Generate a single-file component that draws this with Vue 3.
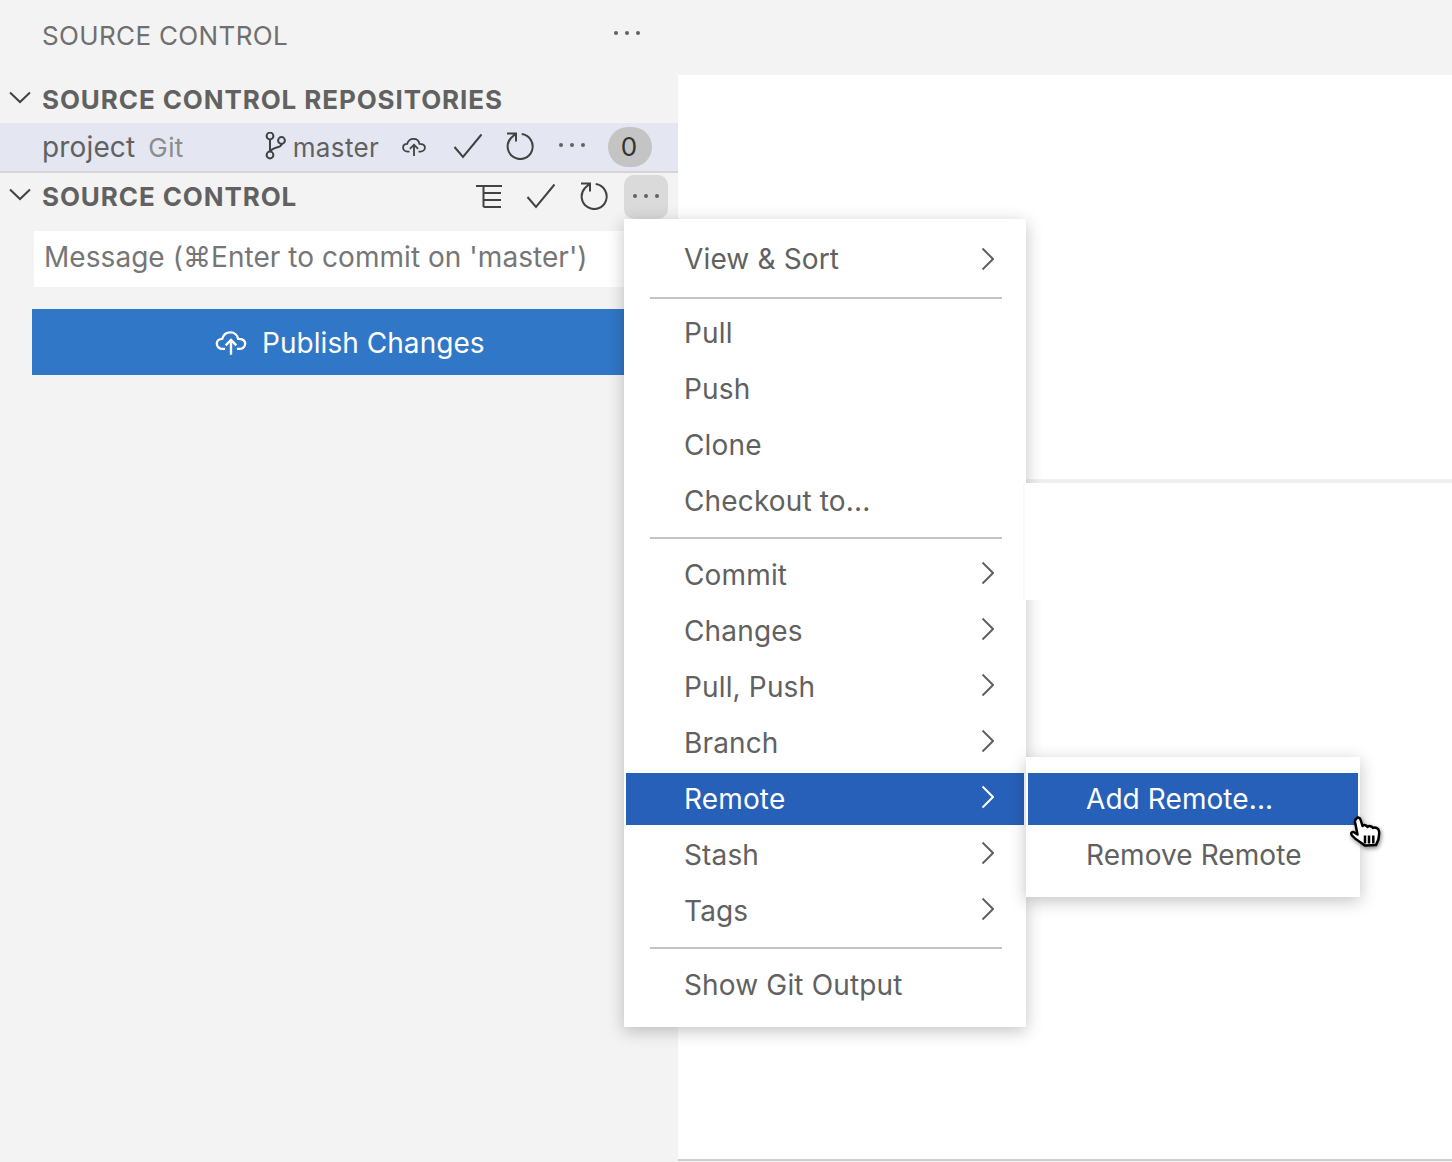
<script setup>
const items = [
  { label: 'View & Sort', sub: true },
  { sep: true },
  { label: 'Pull' },
  { label: 'Push' },
  { label: 'Clone' },
  { label: 'Checkout to...' },
  { sep: true },
  { label: 'Commit', sub: true },
  { label: 'Changes', sub: true },
  { label: 'Pull, Push', sub: true },
  { label: 'Branch', sub: true },
  { label: 'Remote', sub: true, active: true },
  { label: 'Stash', sub: true },
  { label: 'Tags', sub: true },
  { sep: true },
  { label: 'Show Git Output' },
]
</script>

<template>
  <div class="app">
    <aside class="sidebar">
      <div class="title-bar">
        <span class="title">SOURCE CONTROL</span>
        <svg class="dots title-dots" width="28" height="6" viewBox="0 0 28 6"><circle cx="3" cy="3" r="2"/><circle cx="14" cy="3" r="2"/><circle cx="25" cy="3" r="2"/></svg>
      </div>

      <div class="section-head">
        <svg class="twist" width="24" height="14" viewBox="0 0 24 14"><path d="M2 2.5 L12 12 L22 2.5"/></svg>
        <span>SOURCE CONTROL REPOSITORIES</span>
      </div>

      <div class="repo-row">
        <span class="repo-name">project</span>
        <span class="repo-type">Git</span>
        <svg class="branch" width="22" height="28" viewBox="0 0 22 28">
          <circle cx="5" cy="4" r="3.4"/><circle cx="5" cy="23" r="3.4"/><circle cx="16.500" cy="8.500" r="3.4"/>
          <path d="M5 7.400 V19.600 M16.500 11.900 C16.500 16.500 7 14.500 5.500 19.700"/>
        </svg>
        <span class="branch-name">master</span>
        <svg class="cloud" width="24" height="20" viewBox="0 0 26 22">
          <path d="M8 16 H6 C3 16 1 14 1 11.500 C1 9 3 7.500 5.500 7.500 C6.500 4 9.500 2 12.500 2 C16 2 18.500 4.500 19 7.500 C22.500 7.500 25 9 25 11.500 C25 14 23 16 20 16 H18"/>
          <path d="M13 21 V9 M8.500 13 L13 8.500 L17.500 13"/>
        </svg>
        <svg class="check" width="30" height="26" viewBox="0 0 30 26"><path d="M1.500 14 L10 24 L28.500 1.500"/></svg>
        <svg class="refresh" width="28" height="28" viewBox="0 0 28 28"><path d="M15.700 2.100 A12.500 12.500 0 1 1 5 6 L10 1.500 M1 1.500 H10 V9.500"/></svg>
        <svg class="dots" width="28" height="6" viewBox="0 0 28 6"><circle cx="3" cy="3" r="2"/><circle cx="14" cy="3" r="2"/><circle cx="25" cy="3" r="2"/></svg>
        <span class="badge">0</span>
      </div>

      <div class="section-head second">
        <svg class="twist" width="24" height="14" viewBox="0 0 24 14"><path d="M2 2.500 L12 12 L22 2.500"/></svg>
        <span>SOURCE CONTROL</span>
        <div class="head-actions">
          <svg class="tree" width="28" height="24" viewBox="0 0 28 24"><path d="M1 2 H27 M8.500 2 V23 M8.500 9 H26 M8.500 16 H26 M8.500 23 H26"/></svg>
          <svg class="check" width="30" height="26" viewBox="0 0 30 26"><path d="M1.500 14 L10 24 L28.500 1.500"/></svg>
          <svg class="refresh" width="28" height="28" viewBox="0 0 28 28"><path d="M15.700 2.100 A12.500 12.500 0 1 1 5 6 L10 1.500 M1 1.500 H10 V9.500"/></svg>
          <span class="more">
            <svg class="dots" width="28" height="6" viewBox="0 0 28 6"><circle cx="3" cy="3" r="2"/><circle cx="14" cy="3" r="2"/><circle cx="25" cy="3" r="2"/></svg>
          </span>
        </div>
      </div>

      <div class="message">Message (⌘Enter to commit on 'master')</div>
      <div class="publish">
        <svg class="cloud white" width="32" height="26" viewBox="0 0 26 22">
          <path d="M8 16 H6 C3 16 1 14 1 11.500 C1 9 3 7.500 5.500 7.500 C6.500 4 9.500 2 12.500 2 C16 2 18.500 4.500 19 7.500 C22.500 7.500 25 9 25 11.500 C25 14 23 16 20 16 H18"/>
          <path d="M13 21 V9 M8.500 13 L13 8.500 L17.500 13"/>
        </svg>
        <span>Publish Changes</span>
      </div>
    </aside>

    <main class="editor">
      <div class="tabs"></div>
      <div class="pane top"></div>
      <div class="pane"></div>
    </main>

    <div class="menu">
      <template v-for="(item, i) in items" :key="i">
        <div v-if="item.sep" class="sep"></div>
        <div v-else class="row" :class="{ active: item.active }">
          <span>{{ item.label }}</span>
          <svg v-if="item.sub" class="chev" width="14" height="24" viewBox="0 0 14 24"><path d="M2.500 1.500 L13 12 L2.500 22.500"/></svg>
        </div>
      </template>
    </div>
    <div class="patch"></div>

    <div class="submenu">
      <div class="row active"><span>Add Remote...</span></div>
      <div class="row"><span>Remove Remote</span></div>
    </div>

    <svg class="hand" width="32" height="36" viewBox="0 0 32 36">
      <path d="M6.500 2.500 C8 1 10 1.500 10.500 3.500 L12.500 10 C14 8.500 16.500 9 17.500 11 C19 9.500 22 10 23 12 C25 11 28.500 12 29 15 C29.500 19 29 24 26 29 L15 29.500 C12 27 6 24 2 19.500 C0.500 17.500 1.500 15.500 3.500 16 L7.500 18.500 L5 6 C4.800 4.500 5.500 3.300 6.500 2.500 Z"/>
      <path class="bars" d="M15 19.500 V27.500 M19 19.500 V27.500 M23.300 19.500 V27.500"/>
    </svg>
  </div>
</template>

<style scoped>
.app {
  display: flex;
  width: 1452px;
  height: 1162px;
  position: relative;
  overflow: hidden;
  font-family: Inter, "Liberation Sans", sans-serif;
  letter-spacing: 0.15px;
  color: #616161;
  background: #f3f3f3;
}

.sidebar {
  width: 678px;
  flex: none;
  background: #f3f3f3;
}

.title-bar {
  height: 75px;
  padding: 0 37px 4px 42px;
  box-sizing: border-box;
  display: flex;
  align-items: center;
  justify-content: space-between;
}

.title {
  font-size: 26px;
  letter-spacing: 0.35px;
  color: #6f6f6f;
}

.title-dots {
  margin-top: -6px;
}

.dots circle {
  fill: #616161;
}

.section-head {
  height: 48px;
  display: flex;
  align-items: center;
  padding-left: 8px;
  font-size: 26px;
  font-weight: 700;
  letter-spacing: 0.9px;
  color: #616161;
}

.section-head.second {
  height: 46px;
}

.twist {
  margin-right: 10px;
  margin-top: -4px;
}

.twist path,
.chev path,
.check path,
.refresh path,
.tree path,
.cloud path,
.branch path,
.branch circle {
  fill: none;
  stroke: #424242;
  stroke-width: 2;
}

.repo-row {
  height: 50px;
  box-sizing: border-box;
  background: #e4e6f1;
  border-bottom: 2px solid #d4d4d9;
  display: flex;
  align-items: center;
  padding-left: 42px;
}

.repo-name {
  font-size: 28px;
}

.repo-type {
  font-size: 26px;
  margin-left: 13px;
  letter-spacing: 0.4px;
  color: #8c8c8c;
}

.branch {
  margin-left: 81px;
  margin-top: -2px;
}

.branch-name {
  font-size: 26px;
  letter-spacing: 0.35px;
  margin-left: 6px;
}

.repo-row .cloud {
  margin-left: 23px;
  margin-top: -1px;
}

.repo-row .check {
  margin-left: 27px;
  margin-top: -3px;
}

.repo-row .refresh {
  margin-left: 23px;
  margin-top: -3px;
}

.repo-row .dots {
  margin-left: 24px;
  margin-top: -4px;
}

.badge {
  width: 44px;
  height: 40px;
  margin-left: 22px;
  border-radius: 20px;
  background: #c4c4c4;
  color: #333;
  font-size: 26px;
  padding: 0 2px 2px 0;
  box-sizing: border-box;
  display: flex;
  align-items: center;
  justify-content: center;
}

.head-actions {
  margin-left: auto;
  display: flex;
  align-items: center;
  padding-right: 10px;
}

.head-actions .check {
  margin-left: 23px;
}

.head-actions .refresh {
  margin-left: 24px;
}

.more {
  width: 44px;
  height: 44px;
  margin-left: 16px;
  margin-top: 2px;
  padding-bottom: 2px;
  box-sizing: border-box;
  border-radius: 10px;
  background: #dadada;
  display: flex;
  align-items: center;
  justify-content: center;
}

.message {
  margin: 12px 32px 0 34px;
  height: 56px;
  background: #fff;
  padding-left: 10px;
  font-size: 28px;
  letter-spacing: 0.05px;
  line-height: 52px;
  color: #767676;
  white-space: nowrap;
}

.publish {
  margin: 22px 32px 0;
  height: 66px;
  box-sizing: border-box;
  padding: 2px 0 0 183px;
  background: #3077c7;
  color: #fff;
  font-size: 28px;
  letter-spacing: 0.05px;
  display: flex;
  align-items: center;
  gap: 15px;
}

.cloud.white path {
  stroke: #fff;
}

.editor {
  flex: 1;
  display: flex;
  flex-direction: column;
  padding-bottom: 1px;
}

.tabs {
  height: 75px;
  flex: none;
}

.pane {
  flex: 1;
  background: #fff;
  border-bottom: 2px solid #cfcfcf;
}

.pane.top {
  flex: none;
  height: 404px;
  border-bottom: 4px solid #efefef;
}

.menu,
.submenu {
  position: absolute;
  display: flex;
  flex-direction: column;
  background: #fff;
  box-shadow: 0 4px 16px rgba(0, 0, 0, 0.24);
  font-size: 28px;
}

.menu {
  left: 624px;
  top: 219px;
  width: 402px;
  box-sizing: border-box;
  padding: 12px 2px 14px;
}

.submenu {
  left: 1026px;
  top: 757px;
  width: 334px;
  box-sizing: border-box;
  padding: 14px 2px;
  letter-spacing: 0.08px;
}

.row {
  height: 52px;
  flex: none;
  margin: 2px 0;
  display: flex;
  align-items: center;
  justify-content: space-between;
  padding: 0 30px 0 58px;
  white-space: nowrap;
}

.row.active {
  background: #2660b9;
  color: #fff;
}

.row.active .chev path {
  stroke: #fff;
}

.chev {
  margin-top: -4px;
}

.row:first-child .chev {
  margin-top: 0;
}

.chev path {
  stroke: #616161;
}

.sep {
  height: 2px;
  flex: none;
  margin: 8px 22px 8px 24px;
  background: #c4c4c4;
}

.sep:nth-child(2) {
  margin-top: 10px;
  margin-bottom: 6px;
}

.patch {
  position: absolute;
  left: 1023px;
  top: 483px;
  width: 30px;
  height: 117px;
  background: linear-gradient(to right, #f8f8f8, #fff 3px);
}

.hand {
  position: absolute;
  left: 1350px;
  top: 816px;
  filter: drop-shadow(1px 2px 2px rgba(0, 0, 0, 0.45));
}

.hand path {
  fill: #fff;
  stroke: #000;
  stroke-width: 2.5;
  stroke-linejoin: round;
}

.hand .bars {
  fill: none;
  stroke-width: 2.5;
}
</style>

<style>
html,
body {
  margin: 0;
  background: #f3f3f3;
}
</style>
